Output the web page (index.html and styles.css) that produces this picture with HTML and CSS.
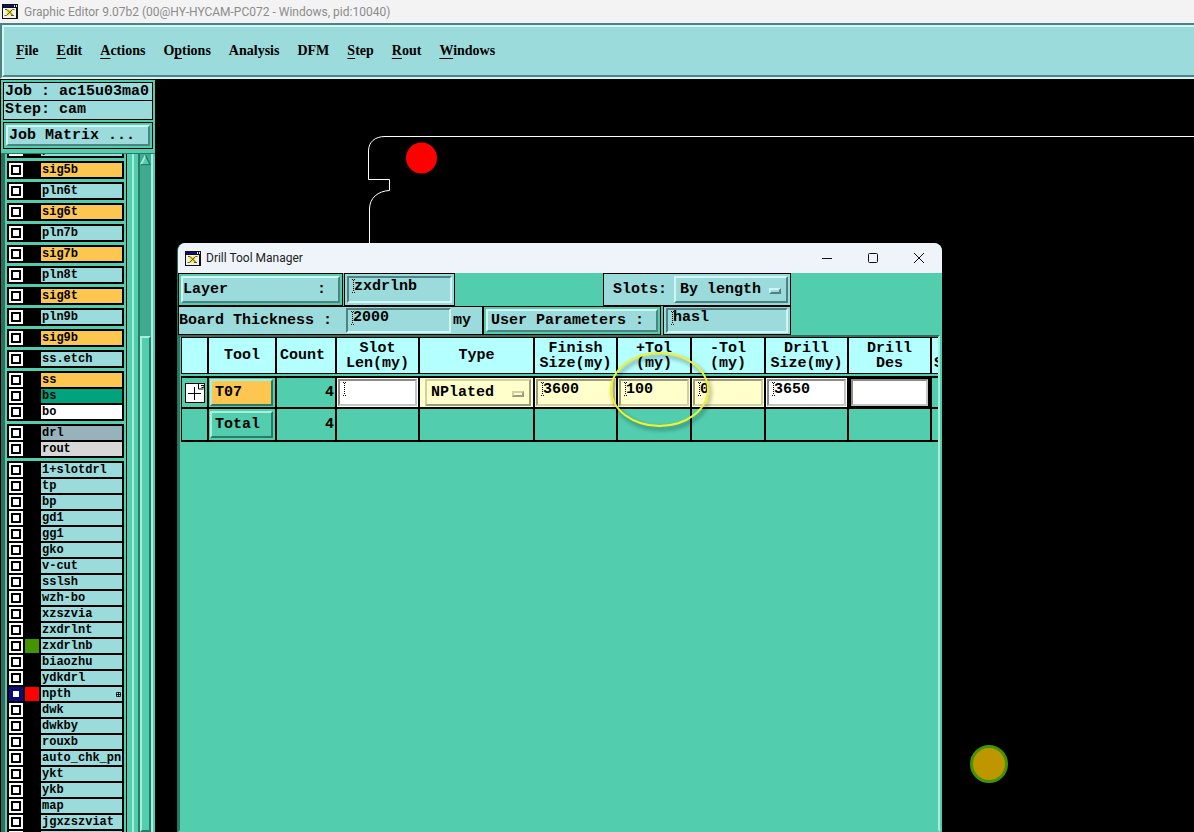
FILE: index.html
```html
<!DOCTYPE html>
<html lang="en">
<head>
<meta charset="utf-8">
<title>Graphic Editor 9.07b2</title>
<link rel="stylesheet" href="styles.css">
</head>
<body>
<svg class="defs" aria-hidden="true">
  <symbol id="app-icon" viewBox="0 0 16 15">
    <rect width="16" height="15" fill="#111"/>
    <rect x="1" y="4" width="13" height="10" fill="#f4f4ec"/>
    <rect x="1" y="1" width="11" height="2" fill="#101070"/>
    <path d="M12.500 1v2M14.500 1v2" stroke="#ddd"/>
    <path d="M5 6l5 5M10 6l-5 5" stroke="#f0e420" stroke-width="3"/>
    <path d="M3 5.500h2l6 6M12.500 5.500h-2l-6 6h-2M9 11.500h3" stroke="#333" stroke-width=".8" fill="none"/>
  </symbol>
</svg>
<header class="titlebar">
  <svg class="app-icon"><use href="#app-icon"/></svg>
  <span>Graphic Editor 9.07b2 (00@HY-HYCAM-PC072 - Windows, pid:10040)</span>
</header>
<nav class="menubar">
  <div class="menubar-inner">
    <button><u>F</u>ile</button>
    <button><u>E</u>dit</button>
    <button><u>A</u>ctions</button>
    <button>O<u>p</u>tions</button>
    <button>Analysis</button>
    <button>DFM</button>
    <button><u>S</u>tep</button>
    <button><u>R</u>out</button>
    <button><u>W</u>indows</button>
  </div>
</nav>
<main class="workspace">
  <aside class="sidebar">
    <div class="job">
      <div class="job-line">Job : ac15u03ma0</div>
      <div class="job-line">Step: cam</div>
      <div class="matrix"><button class="raised matrix-button">Job Matrix ...</button></div>
    </div>
    <div class="layers">
      <div class="layer-list" id="layer-list"></div>
      <div class="list-edge"></div>
      <div class="scrollbar">
        <svg class="scroll-arrow" viewBox="0 0 12 12"><path d="M6 1L1 11H11Z" fill="#52ceae"/><path d="M6 1L1 11" stroke="#a5efdc" stroke-width="2"/><path d="M6 1L11 11H1" fill="none" stroke="#277c68" stroke-width="1.500"/></svg>
        <div class="thumb"></div>
      </div>
    </div>
  </aside>
  <section class="canvas">
    <svg class="board" aria-hidden="true">
      <path d="M4000 57.500H230C220 57.500 213.500 63 213.500 72V100.500H234.500V111.500C223 112 214.500 119 214.500 130V170" fill="none" stroke="#fff"/>
      <circle cx="266.500" cy="79" r="15.500" fill="#f00"/>
      <circle cx="834" cy="685" r="17.500" fill="#bd9600" stroke="#449400" stroke-width="3"/>
    </svg>
    <div class="dialog" role="dialog" aria-labelledby="dlg-title">
      <div class="dialog-title">
        <svg class="app-icon"><use href="#app-icon"/></svg>
        <span id="dlg-title">Drill Tool Manager</span>
        <div class="window-buttons">
          <button aria-label="Minimize"><svg viewBox="0 0 12 12"><path d="M1 6.500h10"/></svg></button>
          <button aria-label="Maximize"><svg viewBox="0 0 12 12"><rect x="1.500" y="1.500" width="9" height="9" rx="1"/></svg></button>
          <button aria-label="Close"><svg viewBox="0 0 12 12"><path d="M1 1l10 10M11 1L1 11"/></svg></button>
        </div>
      </div>
      <div class="form">
        <div class="form-row first">
          <div class="box green layer-box"><button class="raised layer-button"><span>Layer</span><span>:</span></button></div>
          <div class="box"><div class="field medium"><input aria-label="Layer" value="zxdrlnb"><i class="caret"></i></div></div>
          <div class="box slots">
            <label for="slots">Slots:</label>
            <div class="picker raised"><select id="slots"><option>By length</option></select></div>
          </div>
        </div>
        <div class="form-row">
          <div class="box thickness">
            <label for="thickness">Board Thickness :</label>
            <div class="field medium"><input id="thickness" value="2000"><i class="caret"></i></div>
            <span>my</span>
          </div>
          <div class="box green params"><button class="raised">User Parameters :</button></div>
          <div class="box finish"><div class="field"><input aria-label="User parameters" value="hasl"><i class="caret"></i></div></div>
        </div>
      </div>
      <div class="tools">
        <table>
          <colgroup><col class="c-add"><col class="c-tool"><col class="c-count"><col class="c-size"><col class="c-type"><col class="c-size"><col class="c-tol"><col class="c-tol"><col class="c-size"><col class="c-size"><col></colgroup>
          <thead>
            <tr><th></th><th>Tool</th><th class="count-head">Count</th><th>Slot<br>Len(my)</th><th>Type</th><th>Finish<br>Size(my)</th><th>+Tol<br>(my)</th><th>-Tol<br>(my)</th><th>Drill<br>Size(my)</th><th>Drill<br>Des</th><th class="cut"><br>S</th></tr>
          </thead>
          <tbody>
            <tr>
              <td><button class="add" aria-label="Expand"><svg viewBox="0 0 20 20"><rect x=".5" y=".5" width="19" height="19" fill="#fff" stroke="#000"/><path d="M3 10.500h13M9.500 4v13" stroke="#000"/><path d="M13.500 0v6h5M19 2.500h-3M16.500 4.500h2v-1" fill="none" stroke="#000"/></svg></button></td>
              <td><button class="raised tool amber">T07</button></td>
              <td class="num">4</td>
              <td class="white"><div class="field"><input aria-label="Slot length"><i class="caret"></i></div></td>
              <td class="cream"><div class="picker raised type"><select aria-label="Type"><option>NPlated</option></select></div></td>
              <td class="cream"><div class="field"><input aria-label="Finish size" value="3600"><i class="caret"></i></div></td>
              <td class="cream"><div class="field"><input aria-label="Plus tolerance" value="100"><i class="caret"></i></div></td>
              <td class="cream"><div class="field"><input aria-label="Minus tolerance" value="0"><i class="caret"></i></div></td>
              <td class="white"><div class="field"><input aria-label="Drill size" value="3650"><i class="caret"></i></div></td>
              <td class="white focus"><div class="field"><input aria-label="Drill designation"></div></td>
              <td></td>
            </tr>
            <tr>
              <td></td><td><button class="raised tool">Total</button></td><td class="num">4</td><td></td><td></td><td></td><td></td><td></td><td></td><td></td><td></td>
            </tr>
          </tbody>
        </table>
      </div>
      <div class="highlight"></div>
    </div>
  </section>
</main>
<script src="layers.js"></script>
</body>
</html>
```

FILE: styles.css
```css
:root {
  --green: #52ceae;
  --green-light: #a5efdc;
  --green-dark: #277c68;
  --blue: #9bdbdb;
  --blue-light: #d2f6f6;
  --blue-dark: #4f8282;
  --amber: #fcc650;
}
*, *::after { box-sizing: border-box; }
body {
  margin: 0;
  height: 100vh;
  overflow: hidden;
  display: flex;
  flex-direction: column;
  background: #000;
  color: #000;
  font: bold 15px/17px "Liberation Mono", monospace;
}
button, input, select { font: inherit; color: inherit; border-radius: 0; margin: 0; }
button { background: none; border: 0; padding: 0; }
.defs { position: absolute; width: 0; height: 0; }
.app-icon { width: 16px; height: 15px; flex: none; }

.titlebar {
  flex: none;
  height: 23px;
  display: flex;
  align-items: center;
  gap: 6px;
  padding-left: 2px;
  background: #f3f3f3;
  color: #8c8c8c;
  font: 12px/16px Roboto, sans-serif;
  white-space: nowrap;
}
.menubar {
  flex: none;
  height: 56px;
  background: var(--blue);
  border: 2px solid;
  border-color: var(--blue-dark) var(--blue-light) var(--blue-light) var(--blue-dark);
  border-right: 0;
}
.menubar-inner {
  height: 100%;
  display: flex;
  align-items: center;
  gap: 18px;
  padding-left: 12px;
  border: 2px solid;
  border-color: var(--blue-light) var(--blue-dark) var(--blue-dark) var(--blue-light);
  border-right: 0;
  font: bold 14px/18px "Liberation Serif", serif;
}
.menubar u { text-underline-offset: 3px; text-decoration-thickness: 1px; text-decoration-skip-ink: none; }

.workspace { flex: 1; min-height: 0; display: flex; }
.sidebar {
  flex: none;
  width: 155px;
  display: flex;
  flex-direction: column;
  background: var(--green);
  border-left: 1px solid #000;
}
.job { padding: 2px 2px 4px; border-top: 1px solid #000; }
.job-line {
  height: 19px;
  padding-left: 1px;
  background: var(--blue);
  border: 1px solid #000;
  overflow: hidden;
  white-space: nowrap;
}
.job-line + .job-line { border-top: 0; }
.matrix { margin-top: 2px; height: 27px; padding: 2px; border: 1px solid #000; }
.raised {
  border: 2px solid;
  border-color: var(--blue-light) var(--blue-dark) var(--blue-dark) var(--blue-light);
  background: var(--blue);
  text-align: left;
}
.matrix-button { width: 100%; height: 100%; padding-left: 1px; white-space: nowrap; }

.layers { flex: 1; min-height: 0; display: flex; border-left: 4px solid #2f6f5f; border-top: 1px solid var(--green-dark); }
.layer-list {
  flex: none;
  width: 122px;
  display: flex;
  flex-direction: column;
  gap: 3px;
  padding-left: 2px;
  border-right: 1px solid #000;
  overflow: hidden;
  font-size: 12px;
  line-height: 14px;
}
.group { width: 117px; flex: none; display: grid; gap: 2px; padding: 2px; background: #000; }
.group:first-child { margin-top: -14px; }
.layer { display: grid; grid-template-columns: 14px 14px 81px; column-gap: 2px; height: 14px; }
.layer input {
  appearance: none;
  width: 14px;
  height: 14px;
  background: #fff;
  border: 2px solid #fff;
  box-shadow: inset 0 0 0 2px #000;
}
.layer input:checked { border-color: #0a0a90; box-shadow: inset 0 0 0 2px #0a0a60; }
.layer label { background: var(--blue); padding-left: 1px; overflow: hidden; white-space: nowrap; display: flex; justify-content: space-between; }
.layer svg { flex: none; width: 5px; height: 5px; margin: 5px 1px; }
.layer .amber { background: var(--amber); }
.layer .teal { background: #00a37c; }
.layer .white { background: #fff; }
.layer .slate { background: #98b2bc; }
.layer .grey { background: #d8d8d8; }
.swatch.green { background: #449400; }
.swatch.red { background: #f00; }
.list-edge { flex: none; width: 11px; border-left: 5px solid var(--green); background: linear-gradient(90deg, var(--green-light) 2px, var(--green) 2px); }
.scrollbar {
  flex: none;
  width: 15px;
  display: flex;
  flex-direction: column;
  background: #40aa90;
  border-left: 2px solid var(--green-dark);
  border-right: 2px solid var(--green-light);
}
.scroll-arrow { width: 11px; height: 12px; }
.thumb { flex: 1; margin-top: 170px; background: var(--green); border: 2px solid; border-color: var(--green-light) var(--green-dark) var(--green-dark) var(--green-light); }

.canvas { flex: 1; position: relative; overflow: hidden; }
.board { position: absolute; inset: 0; width: 100%; height: 100%; }
.dialog {
  position: absolute;
  left: 22px;
  top: 164px;
  bottom: 0;
  width: 765px;
  display: flex;
  flex-direction: column;
  background: var(--green);
  border-left: 1px solid #24705e;
  border-radius: 8px 8px 0 0;
  overflow: hidden;
}
.dialog-title {
  flex: none;
  height: 30px;
  display: flex;
  align-items: center;
  gap: 5px;
  padding-left: 7px;
  background: #eff4fa;
  color: #222;
  font: 12px/16px Roboto, sans-serif;
}
.window-buttons { margin-left: auto; display: flex; }
.window-buttons button { width: 46px; height: 28px; display: grid; place-items: center; }
.window-buttons svg { width: 12px; height: 12px; fill: none; stroke: #111; }

.form { flex: none; width: 613px; }
.form-row { display: flex; height: 29px; }
.form-row.first { height: 33px; }
.box { display: flex; align-items: center; background: var(--blue); border: 1px solid #000; padding: 2px; white-space: nowrap; }
.box.green { background: var(--green); }
.box .raised { height: 100%; }
.layer-box { width: 165px; margin-right: 1px; }
.layer-button { width: 100%; display: flex; justify-content: space-between; align-items: center; padding: 0 12px 0 0; }
.slots { margin-left: auto; padding-left: 9px; gap: 7px; }
.thickness { width: 306px; border-right-width: 2px; padding: 1px 0; }
.thickness .field { margin: 0 2px 0 14px; }
.params { width: 177px; border-left-width: 0; margin-right: 2px; }
.params .raised { width: 100%; padding-left: 3px; }
.finish { flex: 1; padding: 1px 2px; }
.field { position: relative; width: 100%; height: 100%; }
.field.medium { width: 105px; }
.field input {
  display: block;
  width: 100%;
  height: 100%;
  padding: 0 0 6px 5px;
  background: transparent;
  border: 2px solid;
  border-color: var(--blue-dark) var(--blue-light) var(--blue-light) var(--blue-dark);
}
.caret { position: absolute; left: 5px; top: 3px; width: 3px; height: 14px; border: 1px dotted #000; border-width: 1px 0; background: repeating-linear-gradient(#000 0 1px, transparent 1px 2px) 1px 0 / 1px 100% no-repeat; }
.picker { position: relative; width: 114px; }
.picker select { appearance: none; width: 100%; height: 100%; padding: 0 0 0 4px; border: 0; background: transparent; }
.picker::after {
  content: "";
  position: absolute;
  right: 5px;
  top: 50%;
  width: 12px;
  height: 6px;
  margin-top: -2px;
  border: 2px solid;
  border-color: var(--blue-light) var(--blue-dark) var(--blue-dark) var(--blue-light);
}

.tools { flex: 1; margin-right: 2px; padding-left: 1px; border: 2px solid; border-color: #2f6f5f var(--green-light) transparent var(--green-dark); overflow: hidden; }
table { table-layout: fixed; width: 100%; border-spacing: 0; }
.c-add { width: 28px; }
.c-tool { width: 68px; }
.c-count { width: 60px; }
.c-size { width: 83px; }
.c-type { width: 115px; }
.c-tol { width: 74px; }
th, td { padding: 0; border: 0 solid #000; border-right-width: 2px; }
th:last-child, td:last-child { border-right-width: 0; }
th:first-child, td:first-child { border-left-width: 1px; }
th { height: 37px; background: #b4ffff; border-top-width: 1px; border-bottom-width: 1px; line-height: 15px; white-space: nowrap; }
th.count-head { text-align: left; padding-left: 3px; }
th.cut { overflow: hidden; text-align: left; padding-left: 2px; }
tbody::before { content: ""; display: block; height: 2px; }
td { height: 33px; border-bottom-width: 2px; }
tbody tr:first-child td { border-top-width: 2px; }
td .field, td .picker, td .tool { display: block; height: 27px; width: auto; margin: 0 1px; }
td .tool { width: 63px; padding-left: 3px; }
.tool { background: var(--green); border-color: var(--green-light) var(--green-dark) var(--green-dark) var(--green-light); }
.tool.amber { background: var(--amber); }
.add { display: block; width: 20px; height: 20px; margin: 0 auto; }
.add svg { display: block; width: 20px; height: 20px; }
.num { text-align: right; padding-right: 1px; }
td.white { background: #fff; }
td.cream { background: #ffffcc; }
td .field input { border-color: #8c8c84 #c4c4c0 #c4c4c0 #8c8c84; }
td.cream .field input { border-color: #9c9c80 #d0d0a4 #d0d0a4 #9c9c80; }
td .picker { margin: 0 2px 0 5px; background: none; border-color: #d0d0a4 #9c9c80 #9c9c80 #d0d0a4; }
td .picker::after { border-color: #d0d0a4 #9c9c80 #9c9c80 #d0d0a4; }
td.focus { background: #000; }
td.focus .field { background: #fff; margin: 0 2px; }
.highlight { position: absolute; left: 432px; top: 109px; width: 99px; height: 75px; border: 2px solid #f2f22c; border-radius: 50%; filter: drop-shadow(2px 3px 2px rgba(0, 0, 0, .5)); }
```

FILE: layers.js
```js
const groups = [
  ["pln5t"], ["sig5b:amber"], ["pln6t"], ["sig6t:amber"], ["pln7b"], ["sig7b:amber"],
  ["pln8t"], ["sig8t:amber"], ["pln9b"], ["sig9b:amber"], ["ss.etch"],
  ["ss:amber", "bs:teal", "bo:white"],
  ["drl:slate", "rout:grey"],
  ["1+slotdrl", "tp", "bp", "gd1", "gg1", "gko", "v-cut", "sslsh", "wzh-bo", "xzszvia",
    "zxdrlnt", "zxdrlnb", "biaozhu", "ydkdrl", "npth", "dwk", "dwkby", "rouxb",
    "auto_chk_pnl", "ykt", "ykb", "map", "jgxzszviat", ""]
];
const swatches = { zxdrlnb: "green", npth: "red" };
const grid = '<svg viewBox="0 0 5 5"><path d="M.5 .5h4v4h-4zM2.5 0v5M0 2.5h5" fill="none" stroke="#000" stroke-width=".8"/></svg>';

document.getElementById("layer-list").innerHTML = groups.map(rows =>
  '<div class="group">' + rows.map(row => {
    const [name, color = ""] = row.split(":");
    const active = name === "npth";
    const id = "layer-" + name;
    return `<div class="layer"><input type="checkbox" id="${id}"${active ? " checked" : ""}>` +
      `<span class="swatch ${swatches[name] || ""}"></span>` +
      `<label for="${id}" class="${color}">${name}${active ? grid : ""}</label></div>`;
  }).join("") + "</div>"
).join("");
```
